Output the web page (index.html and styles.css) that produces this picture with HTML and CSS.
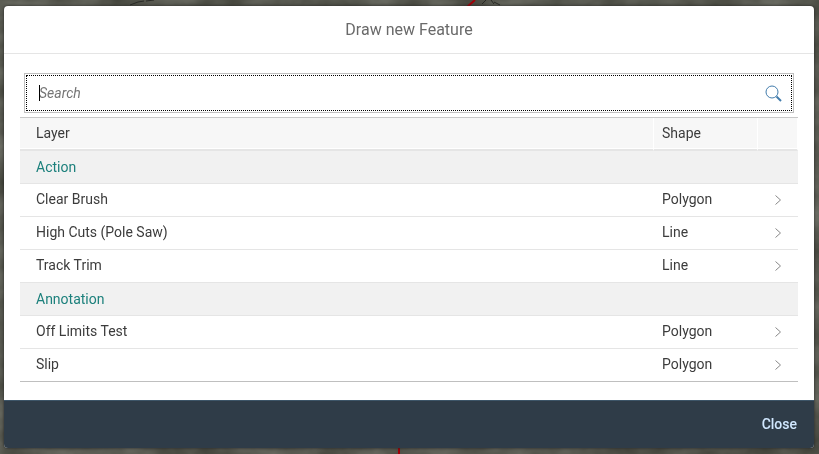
FILE: index.html
```html
<!DOCTYPE html>
<html lang="en">
<head>
<meta charset="utf-8">
<meta name="viewport" content="width=device-width, initial-scale=1">
<title>Draw new Feature</title>
<link rel="stylesheet" href="styles.css">
</head>
<body>
<svg class="map" viewBox="0 0 819 454" preserveAspectRatio="none" aria-hidden="true">
  <defs>
    <filter id="relief" x="0" y="0" width="100%" height="100%" color-interpolation-filters="sRGB">
      <feTurbulence type="fractalNoise" baseFrequency="0.02 0.03" numOctaves="4" seed="8"/>
      <feColorMatrix values="0.25 0 0 0 0.22  0.25 0 0 0 0.225  0.25 0 0 0 0.19  0 0 0 0 1"/>
    </filter>
  </defs>
  <rect width="819" height="454" filter="url(#relief)"/>
  <path class="track" d="M475 0 467 7M399 447v7"/>
  <path class="trail" d="M482 4l4-4M491 0l3 4M494 2l6 3M130 5l8-3 6-1M146 1l8-1"/>
</svg>
<main class="dialog" role="dialog" aria-labelledby="title">
  <header class="dialog-header"><h1 id="title">Draw new Feature</h1></header>
  <section class="content">
    <form class="search">
      <span class="caret"></span>
      <input type="text" placeholder="Search" aria-label="Search">
      <button type="button" aria-label="Search">
        <svg viewBox="0 0 17 17" width="17" height="17"><circle cx="7" cy="7" r="6"/><path class="handle" d="m11.5 11.5 4.5 4.5"/></svg>
      </button>
    </form>
    <table>
      <thead>
        <tr><th scope="col">Layer</th><th scope="col" class="shape">Shape</th><th class="nav"></th></tr>
      </thead>
      <tbody>
        <tr class="group"><th colspan="3" scope="rowgroup">Action</th></tr>
        <tr><td>Clear Brush</td><td>Polygon</td><td class="nav"><button type="button" aria-label="Clear Brush"><svg viewBox="0 0 6 10" width="6" height="10"><path d="m.5.5 5 4.5-5 4.5"/></svg></button></td></tr>
        <tr><td>High Cuts (Pole Saw)</td><td>Line</td><td class="nav"><button type="button" aria-label="High Cuts (Pole Saw)"><svg viewBox="0 0 6 10" width="6" height="10"><path d="m.5.5 5 4.5-5 4.5"/></svg></button></td></tr>
        <tr><td>Track Trim</td><td>Line</td><td class="nav"><button type="button" aria-label="Track Trim"><svg viewBox="0 0 6 10" width="6" height="10"><path d="m.5.5 5 4.5-5 4.5"/></svg></button></td></tr>
      </tbody>
      <tbody>
        <tr class="group"><th colspan="3" scope="rowgroup">Annotation</th></tr>
        <tr><td>Off Limits Test</td><td>Polygon</td><td class="nav"><button type="button" aria-label="Off Limits Test"><svg viewBox="0 0 6 10" width="6" height="10"><path d="m.5.5 5 4.5-5 4.5"/></svg></button></td></tr>
        <tr class="last"><td>Slip</td><td>Polygon</td><td class="nav"><button type="button" aria-label="Slip"><svg viewBox="0 0 6 10" width="6" height="10"><path d="m.5.5 5 4.5-5 4.5"/></svg></button></td></tr>
      </tbody>
    </table>
  </section>
  <footer><button type="button" class="close">Close</button></footer>
</main>
</body>
</html>
```
FILE: styles.css
```css
* { box-sizing: border-box; }

body {
  margin: 0;
  padding: 6px 5px 6px 4px;
  background: #55574f;
  color: #3c3c3c;
  font: 14px/20px Roboto, "Liberation Sans", sans-serif;
}

button {
  margin: 0;
  padding: 0;
  border: 0;
  background: none;
  font: inherit;
}

svg { display: block; fill: none; }

.map { position: fixed; inset: 0; width: 100%; height: 100%; z-index: -1; }
.track { stroke: #a00008; stroke-width: 2; }
.trail { stroke: #292a26; }

.dialog {
  overflow: hidden;
  border-radius: 4px;
  background: #fff;
  box-shadow: 0 0 3px #222;
}

.dialog-header {
  display: flex;
  align-items: center;
  justify-content: center;
  height: 48px;
  border-bottom: 1px solid #e5e5e5;
}

h1 { margin: 0; color: #6a6a6a; font-size: 16px; font-weight: 400; }

.content { padding: 19px 16px 18px; }

.search {
  position: relative;
  display: flex;
  align-items: center;
  height: 40px;
  margin: 0 4px 4px;
  padding: 1px;
  border: 1px solid #bfbfbf;
}

.search input {
  flex: 1;
  min-width: 0;
  height: 100%;
  padding: 0 40px 0 12px;
  border: 1px dotted #000;
  outline: 0;
  background: none;
  color: inherit;
  font: inherit;
}

.search input::placeholder { color: #757575; font-style: italic; opacity: 1; }
.search button { position: absolute; right: 11px; }
.search svg { stroke: #427cac; }
.search .handle { stroke-width: 2; }

.caret {
  position: absolute;
  left: 14px;
  width: 1px;
  height: 16px;
  background: #000;
}

table {
  width: 100%;
  border-spacing: 0;
  border-top: 1px solid #c8c8c8;
  table-layout: fixed;
}

th, td {
  height: 33px;
  padding: 0 8px 2px;
  border-bottom: 1px solid #e5e5e5;
  font-weight: 400;
  text-align: left;
}

th:first-child, td:first-child { padding-left: 16px; }

thead th {
  border-right: 1px solid #fff;
  border-bottom: 2px solid #e5e5e5;
  background: #f7f7f7;
  box-shadow: inset 0 -1px #fff;
}

.shape { width: 104px; }
th.nav { width: 40px; }
.group th { padding-bottom: 0; background: #f1f1f1; color: #1c807c; }
td.nav { padding: 0 17px; }
td.nav svg { stroke: #888; }
.last td { border-bottom-color: #bfbfbf; }

footer {
  display: flex;
  align-items: center;
  justify-content: flex-end;
  height: 48px;
  padding: 0 17px 2px;
  border-top: 1px solid #3d5568;
  background: #2f3c48;
}

.close { color: #d1e8ff; font-weight: 500; }
```
